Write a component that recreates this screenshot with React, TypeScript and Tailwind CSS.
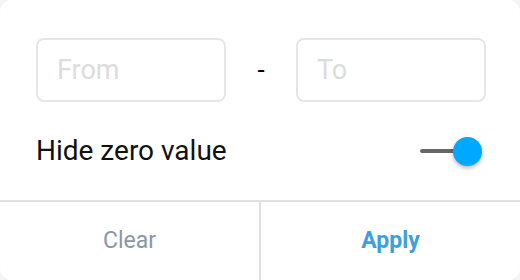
import { useState } from "react";

export default function App() {
  const [hideZero, setHideZero] = useState(true);
  const [from, setFrom] = useState("");
  const [to, setTo] = useState("");

  return (
    <div className="w-[520px] h-[280px] bg-[#f4f4f4] font-['Roboto',sans-serif]">
      <div className="w-full h-full bg-white rounded-[12px] flex flex-col overflow-hidden">
        {/* RANGE INPUTS */}
        <div className="flex items-center pl-9 pr-[34px] pt-[38px]">
          <input
            value={from}
            onChange={(e) => setFrom(e.target.value)}
            placeholder="From"
            className="w-[190px] h-[64px] rounded-[8px] border-2 border-[#e6e6e6] px-[19px] text-[27px] text-[#222] placeholder:text-[#dcdcdc] outline-none"
          />
          <span className="flex-1 text-center text-[26px] text-black">-</span>
          <input
            value={to}
            onChange={(e) => setTo(e.target.value)}
            placeholder="To"
            className="w-[190px] h-[64px] rounded-[8px] border-2 border-[#e6e6e6] px-[19px] text-[27px] text-[#222] placeholder:text-[#dcdcdc] outline-none"
          />
        </div>

        {/* HIDE ZERO TOGGLE */}
        <div className="flex items-center justify-between pl-9 pr-[38px] h-[98px]">
          <span className="text-[28px] text-[#111]">Hide zero value</span>
          <button
            type="button"
            onClick={() => setHideZero(!hideZero)}
            className="relative w-[62px] h-[30px] flex items-center"
          >
            <span className="absolute left-0 right-[8px] h-[4px] rounded-full bg-[#666]" />
            <span
              className={`absolute w-[29px] h-[29px] rounded-full shadow-[0_2px_4px_rgba(0,0,0,0.3)] ${
                hideZero ? "right-0 bg-[#00a8ff]" : "left-0 bg-[#f5f5f5]"
              }`}
            />
          </button>
        </div>

        {/* FOOTER */}
        <div className="flex-1 flex border-t-2 border-[#e0e0e0]">
          <button
            type="button"
            onClick={() => {
              setFrom("");
              setTo("");
            }}
            className="flex-1 text-[23px] text-[#8a96a6] border-r-2 border-[#e0e0e0]"
          >
            Clear
          </button>
          <button type="button" className="flex-1 text-[23px] font-bold text-[#3d9fdf]">
            Apply
          </button>
        </div>
      </div>
    </div>
  );
}
